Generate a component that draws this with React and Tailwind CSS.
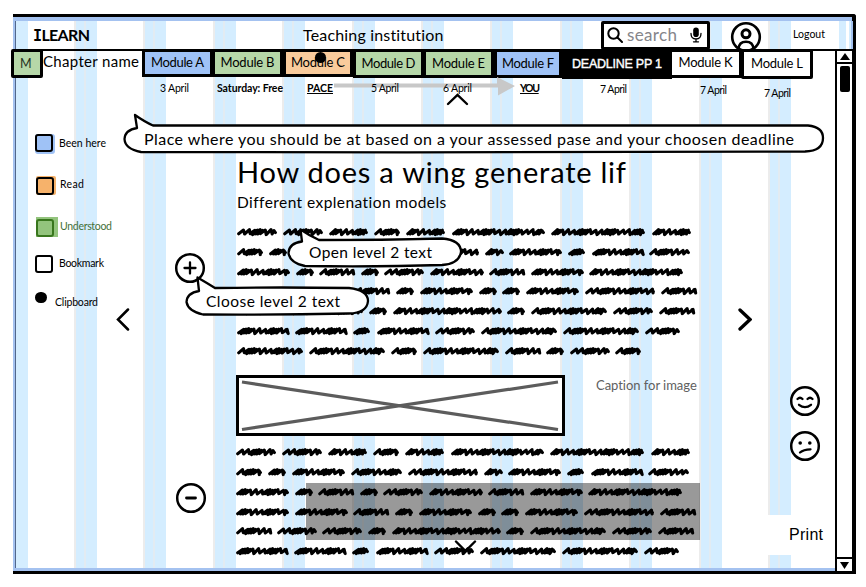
import React, { useLayoutEffect, useRef } from "react";

const SANS = "font-['Lato','Noto_Sans',sans-serif]";

// Spreads a single line of text over exactly `w` pixels by adjusting its tracking.
function Fit({ w, className = "", children }) {
  const ref = useRef(null);
  useLayoutEffect(() => {
    const el = ref.current;
    el.style.letterSpacing = "0px";
    const n = el.textContent.length - 1;
    el.style.letterSpacing = `${(w - el.getBoundingClientRect().width) / n}px`;
  }, [w]);
  return (
    <span className={`block shrink-0 whitespace-nowrap ${className}`} style={{ width: w }}>
      <span ref={ref} className="inline-block">{children}</span>
    </span>
  );
}

const PARAGRAPH = [
  [[0, 40], [46, 86], [92, 131], [137, 163], [169, 208], [215, 308], [314, 408], [415, 454]],
  [[0, 26], [32, 50], [56, 109], [115, 166], [172, 242], [248, 267], [272, 325], [331, 348], [355, 407], [412, 453]],
  [[0, 53], [59, 77], [82, 118], [124, 142], [147, 187], [193, 247], [252, 288], [294, 347], [352, 446]],
  [[0, 53], [59, 112], [117, 153], [159, 177], [183, 236], [242, 260], [265, 283], [289, 342], [348, 418], [424, 460]],
  [[0, 36], [41, 81], [86, 126], [132, 150], [156, 265], [270, 288], [294, 370], [376, 416], [422, 458]],
  [[0, 52], [58, 110], [116, 133], [140, 192], [198, 238], [244, 320], [326, 402], [408, 443]],
  [[0, 66], [72, 148], [154, 180], [186, 262], [268, 304], [309, 327], [333, 373], [378, 404]],
];

function scribble([a, b], seed) {
  let x = a + 1.7;
  let i = seed;
  let d = `M${x} 11.8`;
  while (x < b - 6.5) {
    const p = [5.9, 5.5, 2.5, 2.7, 2.4, 2.8, 5.7][i % 7];
    const top = [8.1, 7.6, 8.4][i % 3];
    const bottom = [12, 11.6, 12.6, 11.9][i % 4];
    d += `L${(x + 4.8).toFixed(1)} ${top}L${(x + p).toFixed(1)} ${bottom}`;
    x += p;
    i += 1;
  }
  return d + `L${b - 3} 8.6L${b - 1.6} 10.6`;
}

function Scribbles({ lines }) {
  return (
    <div className="flex flex-col">
      {lines.map((words, r) => (
        <svg key={r} className="block h-[19.75px] w-[464px]" viewBox="0 0 464 19.75" fill="none" stroke="#000" strokeWidth="3.1" strokeLinecap="round" strokeLinejoin="round">
          {words.map((wd, i) => <path key={i} d={scribble(wd, (wd[1] - wd[0]) % 5)} />)}
        </svg>
      ))}
    </div>
  );
}

function Stripes() {
  return (
    <div className="absolute inset-0 flex">
      <div className="w-[12px] bg-[#d4edff]" />
      <div className="ml-[46px] flex">
        {Array.from({ length: 11 }, (_, i) => (
          <div key={i} className="flex w-[69.4px]">
            <div className="w-[2px] bg-[#ececec]" />
            <div className="w-[8px] bg-[#d4edff]" />
            <div className="w-[2px] bg-[#e2ebf2]" />
            <div className="w-[11px] bg-[#d4edff]" />
          </div>
        ))}
      </div>
    </div>
  );
}

function Tab({ box, children, w, text = "text-[13px]" }) {
  return (
    <div className={`flex shrink-0 items-center justify-center border-[3px] border-black ${box}`}>
      <Fit w={w} className={text}>{children}</Fit>
    </div>
  );
}

function Legend({ row, swatch, gap, w, color = "", children }) {
  return (
    <div className={`flex items-center ${row}`}>
      {swatch}
      <Fit w={w} className={`text-[10.5px] ${gap} ${color}`}>{children}</Fit>
    </div>
  );
}

function Swatch({ box, glow }) {
  return (
    <div className={`relative ${glow}`}>
      <div className={`size-[18px] rounded-[3px] border-2 ${box}`} />
    </div>
  );
}

function Bubble({ place, w, h, d, children, textW, pad, size = "text-[16px]" }) {
  return (
    <div className={`absolute flex ${place} ${pad}`}>
      <svg className="absolute left-0 top-0 overflow-visible" width={w} height={h} fill="#fff" stroke="#000" strokeWidth="2.3" strokeLinejoin="round">
        <path d={d} />
      </svg>
      <Fit w={textW} className={`relative leading-[20px] ${size}`}>{children}</Fit>
    </div>
  );
}

function Face({ children }) {
  return (
    <svg className="block size-[32px]" viewBox="0 0 32 32" fill="none" stroke="#000" strokeWidth="2.3" strokeLinecap="round">
      <circle cx="16" cy="16" r="13.8" strokeWidth="2.5" />
      {children}
    </svg>
  );
}

export default function App() {
  return (
    <div className={`relative h-[587px] w-[866px] overflow-hidden bg-white pl-[13px] pt-[14px] text-black ${SANS}`}>
      <div className="h-[560px] w-[843px] rounded-tr-[3px] border-b-[3px] border-r-[4px] border-t-[3px] border-black">
        <div className="relative flex h-[554px] flex-col border-b-[3px] border-l-[3px] border-t-4 border-[#a4c2f0]">
          <Stripes />
          <div className="absolute inset-y-0 left-[-1px] w-px bg-[#52678c]" />

          {/* Title bar */}
          <header className="relative flex h-[30px] shrink-0 items-center border-b-2 border-black pl-[17px]">
            <Fit w={57} className="text-[16px] font-bold leading-none">
              <span className="font-['DejaVu_Sans_Mono',monospace] text-[15px]">I</span>LEARN
            </Fit>
            <Fit w={141} className="ml-[213px] text-[16px] leading-none">Teaching institution</Fit>
            <div className="ml-[157px] flex h-[29px] w-[109px] shrink-0 items-center rounded-[2px] border-[3px] border-black bg-white pl-[3px]">
              <svg className="block size-[16px]" viewBox="0 0 16 16" fill="none" stroke="#000" strokeWidth="2" strokeLinecap="round">
                <circle cx="6.5" cy="6.5" r="5.2" />
                <path d="M10.5 10.5L15 15" />
              </svg>
              <Fit w={50} className="ml-[4px] pb-0.5 text-[17px] leading-none text-[#85858a]">search</Fit>
              <svg className="ml-[13px] block h-[16px] w-[12px]" viewBox="0 0 12 16">
                <rect x="3.2" y="0.5" width="5.6" height="9.6" rx="2.8" />
                <path d="M1 6.5Q1 12 6 12Q11 12 11 6.5M6 12V14.5M3.5 14.8H8.5" fill="none" stroke="#000" strokeWidth="1.3" strokeLinecap="round" />
              </svg>
            </div>
            <svg className="ml-[20px] block h-[29px] w-[32px] shrink-0" viewBox="0 0 32 29" fill="none" stroke="#000" strokeWidth="2.6">
              <circle cx="16" cy="16" r="13.8" />
              <circle cx="16" cy="12.8" r="4" strokeWidth="3" />
              <path d="M8.5 28Q9 20.8 16 20.8Q23 20.8 23.5 28" />
            </svg>
            <Fit w={32} className="ml-[31px] pb-px text-[10.5px] leading-none">Logout</Fit>
            <div className="ml-[14px] flex h-[28px] w-[14px] shrink-0 justify-between border-r-2 border-[#a4c2f0]">
              <div className="w-[7px] bg-[#d4edff]" />
              <div className="w-[2px] bg-[#d4edff]" />
            </div>
          </header>

          <div className="relative flex min-h-0 flex-1">
            <main className="flex w-[819px] shrink-0 flex-col">
              {/* Module tabs */}
              <nav className="-ml-[5px] -mt-0.5 flex h-[29px] shrink-0 items-start">
                <Tab w={10} box="h-[29px] w-[32px] rounded-[2px] bg-[#b6d7a8] pr-1 pt-0.5" text="text-[12.5px] text-[#26331f]">M</Tab>
                <Fit w={96} className="text-[15px] leading-[25px]">Chapter name</Fit>
                <div className="w-[3px]" />
                <Tab w={53} box="h-[28px] w-[71px] bg-[#9fc2f6]">Module A</Tab>
                <Tab w={54} box="-ml-px h-[28px] w-[71px] bg-[#b6d7a8]">Module B</Tab>
                <div className="relative flex">
                  <Tab w={54} box="h-[28px] w-[70px] bg-[#f9cb9c]">Module C</Tab>
                  <div className="absolute left-[32px] top-[3px] size-[11px] rounded-full bg-black" />
                </div>
                <Tab w={54} box="h-[29px] w-[71px] bg-[#b6d7a8]">Module D</Tab>
                <Tab w={53} box="-ml-px h-[29px] w-[71px] bg-[#b6d7a8]">Module E</Tab>
                <Tab w={52} box="h-[29px] w-[68px] bg-[#9fc2f6]">Module F</Tab>
                <Tab w={90} box="h-[30px] w-[110px] bg-black text-white" text="font-['Liberation_Sans',Arial,sans-serif] text-[12.5px] [-webkit-text-stroke:0.4px_white]">DEADLINE PP 1</Tab>
                <Tab w={54} box="h-[29px] w-[70px] border-l-0 bg-white pb-0.5">Module K</Tab>
                <Tab w={52} box="-ml-px h-[30px] w-[72px] rounded-[2px] bg-white pb-px">Module L</Tab>
              </nav>

              {/* Schedule */}
              <div className="relative flex h-[22px] shrink-0 items-start pl-[144px] pt-[4px] text-[10.5px] leading-[12px]">
                <svg className="absolute left-[318px] top-[-1px] block h-[20px] w-[181px]" viewBox="0 0 181 20" fill="#c8c8c8">
                  <path d="M0 6.5H163V0L181 9L164 18.5V10.5H0Z" />
                </svg>
                <svg className="absolute left-[430px] top-[15px] block h-[13px] w-[23px]" viewBox="0 0 23 13" fill="none" stroke="#000" strokeWidth="2.4" strokeLinecap="round">
                  <path d="M2 11L11.5 2L21 11" />
                </svg>
                <Fit w={29} className="relative">3 April</Fit>
                <Fit w={66} className="relative ml-[28px] font-bold">Saturday: Free</Fit>
                <Fit w={26} className="relative ml-[24px] font-bold [&>span]:underline [&>span]:underline-offset-1">PACE</Fit>
                <Fit w={28} className="relative ml-[38px]">5 April</Fit>
                <Fit w={29} className="relative ml-[44px]">6 April</Fit>
                <Fit w={20} className="relative ml-[48px] font-bold [&>span]:underline [&>span]:underline-offset-1">YOU</Fit>
                <Fit w={27} className="ml-[60px] pt-px">7 April</Fit>
                <Fit w={27} className="ml-[73px] pt-0.5">7 April</Fit>
                <Fit w={27} className="ml-[37px] pt-[5px]">7 April</Fit>
              </div>

              <div className="flex min-h-0 flex-1">
                {/* Status legend */}
                <aside className="flex w-[100px] shrink-0 flex-col pl-[19px] pt-[23px]">
                  <Legend row="h-[42px]" w={47} gap="ml-[4px]" swatch={<Swatch glow="bg-[#9fc2f6] pb-0.5 pr-0.5 rounded-[3px]" box="border-black bg-[#9fc2f6]" />}>Been here</Legend>
                  <Legend row="h-[40px] pl-px" w={24} gap="ml-[4px]" swatch={<Swatch glow="bg-[#f6b26b] pr-0.5 pt-px rounded-[2px]" box="border-black bg-[#f6b26b]" />}>Read</Legend>
                  <Legend row="h-[44px] pl-px" w={52} gap="ml-[2px]" color="text-[#447038]" swatch={<Swatch glow="bg-[#93c47d] pr-[4px] pt-[2px]" box="border-[#38761d] bg-[#93c47d]" />}>Understood</Legend>
                  <Legend row="h-[30px]" w={45} gap="ml-[6px]" swatch={<Swatch glow="" box="border-black bg-white" />}>Bookmark</Legend>
                  <Legend row="h-[42px]" w={43} gap="ml-[8px] pt-[6px]" swatch={<div className="mt-[-5px] h-[11px] w-[12px] rounded-full bg-black" />}>Clipboard</Legend>
                </aside>

                <div className="w-[58px] shrink-0 pt-[208px]">
                  <svg className="block h-[23px] w-[14px]" viewBox="0 0 14 23" fill="none" stroke="#000" strokeWidth="2.5" strokeLinecap="round">
                    <path d="M12 1.5L2 11.5L12 21.5" />
                  </svg>
                </div>

                <div className="flex w-[63px] shrink-0 flex-col gap-[198px] pt-[152px]">
                  <Face><path d="M10.5 16H21.5M16 10.5V21.5" /></Face>
                  <div className="pl-px"><Face><path d="M11.5 16H20.5" strokeWidth="2.8" /></Face></div>
                </div>

                <article className="relative flex w-[502px] shrink-0 flex-col pt-[54px]">
                  <h1 className="h-[38px] text-[29px] leading-[36px]"><Fit w={389}>How does a wing generate lif</Fit></h1>
                  <h2 className="h-[30px] text-[15.5px] leading-[21px]"><Fit w={209}>Different explenation models</Fit></h2>
                  <Scribbles lines={PARAGRAPH} />
                  <div className="-ml-px mt-[15px] flex h-[61px] shrink-0 items-start">
                    <svg className="block h-[61px] w-[329px] border-[3px] border-black bg-white" viewBox="0 0 323 55" stroke="#5c5c5c" strokeWidth="3.2">
                      <path d="M3 4L319 51.5M3 51.5L319 4" />
                    </svg>
                    <Fit w={101} className="ml-[31px] text-[13px] leading-[20px] text-[#606060]">Caption for image</Fit>
                  </div>
                  <div className="relative -ml-px mt-[6px]">
                    <div className="absolute left-[70px] top-[41px] h-[57px] w-[394px] bg-black/40" />
                    <div className="relative"><Scribbles lines={PARAGRAPH.slice(0, 6)} /></div>
                    <svg className="absolute left-[218px] top-[98px] block h-[13px] w-[23px]" viewBox="0 0 23 13" fill="none" stroke="#000" strokeWidth="2.4" strokeLinecap="round">
                      <path d="M2 1.5L11.5 11L21 1.5" />
                    </svg>
                  </div>
                </article>

                <div className="-ml-px w-[13px] shrink-0 pt-[208px]">
                  <svg className="block h-[23px] w-[14px]" viewBox="0 0 14 23" fill="none" stroke="#000" strokeWidth="3.3" strokeLinecap="round">
                    <path d="M2 2L12 11.5L2 21" />
                  </svg>
                </div>

                <div className="flex w-[84px] shrink-0 flex-col pt-[285px]">
                  <div className="flex flex-col items-end gap-[13px] pr-[14px]">
                    <Face><path d="M8.5 14Q11 11.5 13.5 14M18.5 14Q21 11.5 23.5 14M10 19.8Q16 24.5 22 19.8" /></Face>
                    <Face>
                      <path d="M11 22.5Q14.5 19.3 21.5 19.3" />
                      <circle cx="11.2" cy="13" r="1.8" fill="#000" stroke="none" />
                      <circle cx="20.8" cy="13" r="1.8" fill="#000" stroke="none" />
                    </Face>
                  </div>
                  <div className="mt-[53px] flex h-[40px] w-[69px] shrink-0 items-center justify-end self-end bg-white pr-[12px]">
                    <Fit w={34} className="font-['Liberation_Sans',Arial,sans-serif] text-[16px]">Print</Fit>
                  </div>
                </div>
              </div>
            </main>

            {/* Scrollbar */}
            <div className="-mb-[3px] flex w-[17px] shrink-0 flex-col items-center border-l-2 border-black bg-white">
              <div className="flex h-[13px] w-full shrink-0 items-center justify-center border-b-2 border-black">
                <svg className="block h-[7px] w-[10px]" viewBox="0 0 10 7"><path d="M5 0L10 7H0Z" /></svg>
              </div>
              <div className="mt-[2px] h-[26px] w-[10px] shrink-0 rounded-[2px] bg-black" />
              <div className="flex-1" />
              <div className="flex h-[14px] w-full shrink-0 items-center justify-center border-t-2 border-black">
                <svg className="block h-[7px] w-[9px]" viewBox="0 0 9 7"><path d="M0 0H9L4.5 7Z" /></svg>
              </div>
            </div>
          </div>
        </div>
      </div>

      {/* Annotation bubbles floating above the page */}
      <Bubble place="left-[123px] top-[113px]" w={702} h={41} pad="pl-[21px] pt-[16px]" textW={650}
        d="M30 12.5Q350 13 685 12.5Q700 14 700 25Q700 38 682 38.5Q350 40 18 39Q2 36 1.5 26Q2 17 14 15L12 2Q22 9 30 12.5Z">
        Place where you should be at based on a your assessed pase and your choosen deadline
      </Bubble>
      <Bubble place="left-[287px] top-[228px]" w={175} h={40} pad="pl-[22px] pt-[14px]" textW={123} size="text-[15.5px]"
        d="M32 12Q95 12 155 10.5Q174 12 174 24Q172 36 155 37Q90 39 18 38Q3 35 1.5 25Q2 15 15 13.5L13.5 1.5Q23 8 32 12Z">
        Open level 2 text
      </Bubble>
      <Bubble place="left-[185px] top-[276px]" w={185} h={41} pad="pl-[21px] pt-[15px]" textW={134} size="text-[15.5px]"
        d="M30 12Q95 11 164 12Q183 14 183 25Q182 37 164 37.5Q90 39 18 38.5Q3 35 1.5 26Q2 17 14 15L12.5 1.5Q22 7 30 12Z">
        Cloose level 2 text
      </Bubble>
    </div>
  );
}
